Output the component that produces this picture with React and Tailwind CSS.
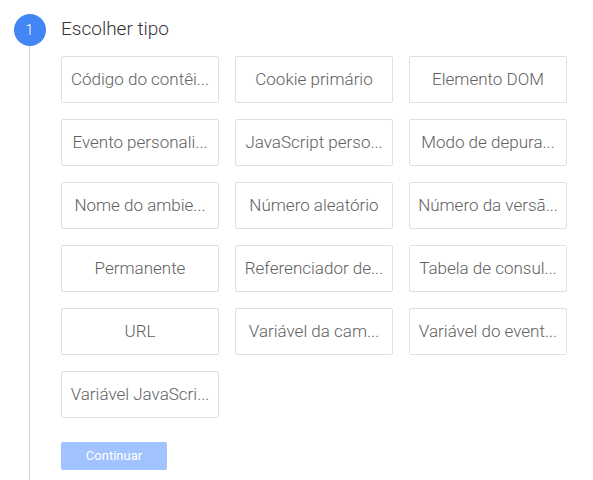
import React from "react";

const items = [
  "Código do contêi...",
  "Cookie primário",
  "Elemento DOM",
  "Evento personali...",
  "JavaScript perso...",
  "Modo de depura...",
  "Nome do ambie...",
  "Número aleatório",
  "Número da versã...",
  "Permanente",
  "Referenciador de...",
  "Tabela de consul...",
  "URL",
  "Variável da cam...",
  "Variável do event...",
  "Variável JavaScri...",
];

export default function App() {
  return (
    <div
      className="w-[593px] h-[480px] bg-white overflow-hidden flex"
      style={{ fontFamily: "Roboto, 'Liberation Sans', sans-serif" }}
    >
      <div className="w-[58px] shrink-0 flex flex-col items-center pl-[1px] pt-[14px]">
        <div className="w-[32px] h-[32px] rounded-full bg-[#4285f4] text-white text-[15px] flex items-center justify-center font-light">
          1
        </div>
        <div className="w-px flex-1 bg-[#d0d0d0]" />
      </div>
      <div className="flex-1 pl-[3px] pt-[17px]">
        <div className="text-[19px] font-light text-[#333333] leading-[24px]">Escolher tipo</div>
        <div className="grid grid-cols-[158px_158px_158px] gap-x-[16px] gap-y-[16px] mt-[15px]">
          {items.map((t) => (
            <div
              key={t}
              className="h-[47px] border border-[#e0e0e0] rounded-[2px] flex items-center justify-center px-[4px] text-[17px] font-light text-[#616161] whitespace-nowrap overflow-hidden"
            >
              {t}
            </div>
          ))}
        </div>
        <div className="mt-[24px] w-[106px] h-[28px] rounded-[2px] bg-[#a0c3ff] text-white text-[13px] flex items-center justify-center">
          Continuar
        </div>
      </div>
    </div>
  );
}
